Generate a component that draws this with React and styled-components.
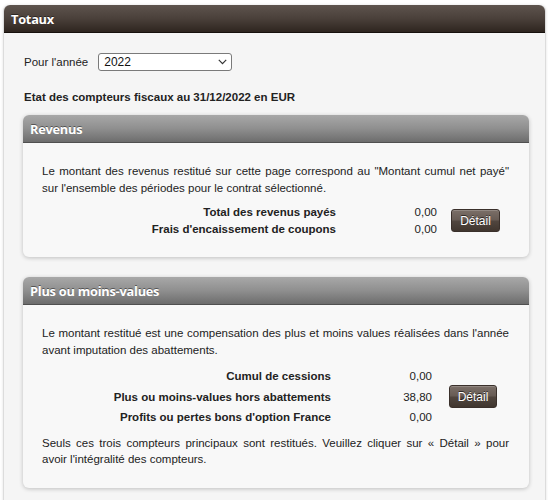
import React from "react";
import styled, { createGlobalStyle } from "styled-components";

const Global = createGlobalStyle`
  html, body { margin: 0; padding: 0; background: #ffffff; }
  body {
    font-family: "Liberation Sans", Arial, sans-serif;
    font-size: 11.5px;
    color: #222;
  }
  * { box-sizing: border-box; }
`;

const Panel = styled.section`
  margin: 5px 2px 12px 3px;
  border: 1px solid #dcdcdc;
  border-top: none;
  border-radius: 6px 6px 0 0;
  background: #f5f5f5;
  box-shadow: 0 0 3px rgba(0, 0, 0, 0.12);
`;

const PanelHeader = styled.header`
  height: 28px;
  display: flex;
  align-items: center;
  padding: 0 7px;
  border-radius: 6px 6px 0 0;
  background: linear-gradient(to bottom, #5e544e 0%, #4a403a 50%, #2e251f 100%);
  border-bottom: 1px solid #17110d;
`;

const Title = styled.h2`
  margin: 0;
  font-family: "Open Sans", "DejaVu Sans", sans-serif;
  font-weight: 700;
  font-size: 12.8px;
  color: #fff;
  letter-spacing: -0.25px;
  text-shadow: 0 -1px 0 rgba(0, 0, 0, 0.45);
`;

const PanelBody = styled.div`
  padding: 20px 16px 12px 19px;
`;

const YearRow = styled.div`
  display: flex;
  align-items: center;
  gap: 10px;
  height: 18px;
  padding-left: 1px;
`;

const SelectWrap = styled.div`
  position: relative;
  width: 134px;
  height: 18px;
`;

const Select = styled.select`
  appearance: none;
  width: 100%;
  height: 100%;
  margin: 0;
  padding: 0 0 0 5px;
  border: 1px solid #7a7a7a;
  border-radius: 3px;
  background: #fff;
  font-family: "Liberation Sans", Arial, sans-serif;
  font-size: 12px;
  color: #111;
`;

const Chevron = styled.svg`
  position: absolute;
  right: 5px;
  top: 6px;
  pointer-events: none;
`;

const Heading = styled.h3`
  margin: 18px 0 10px 1px;
  font-size: 11.5px;
  font-weight: 700;
  line-height: 16px;
  color: #222;
`;

const Card = styled.div`
  background: #f8f8f8;
  border-radius: 6px;
  box-shadow: 0 1px 4px rgba(0, 0, 0, 0.22);
  margin-bottom: 20px;
  overflow: hidden;
`;

const CardHeader = styled.div`
  height: 28px;
  display: flex;
  align-items: center;
  padding: 0 7px;
  background: linear-gradient(to bottom, #a8a8a8 0%, #8f8f8f 50%, #6d6d6d 100%);
  border-bottom: 1px solid #505050;
`;

const CardBody = styled.div`
  padding: 20px 20px 20px 19px;
`;

const Text = styled.p`
  margin: 0;
  line-height: 16.6px;
  text-align: justify;
  color: #222;
`;

const Figures = styled.div`
  display: grid;
  grid-template-columns: ${(p) => p.$label}px ${(p) => p.$value}px auto;
  margin: ${(p) => p.$margin};
`;

const Label = styled.div`
  grid-column: 1;
  font-weight: 700;
  height: ${(p) => (p.$tall ? 25 : 16.6)}px;
  display: flex;
  align-items: center;
  justify-content: flex-end;
`;

const Value = styled.div`
  grid-column: 2;
  height: ${(p) => (p.$tall ? 25 : 16.6)}px;
  display: flex;
  align-items: center;
  justify-content: flex-end;
`;

const ButtonCell = styled.div`
  grid-column: 3;
  grid-row: ${(p) => p.$row};
  display: flex;
  align-items: center;
  padding-left: ${(p) => p.$gap}px;
`;

const DetailButton = styled.button`
  width: ${(p) => p.$w}px;
  height: 23px;
  padding: 0;
  border: 1px solid #3a302b;
  border-radius: 3px;
  background: linear-gradient(
    to bottom,
    #7b6f68 0%,
    #675b54 48%,
    #51463f 52%,
    #40362f 100%
  );
  box-shadow: inset 0 1px 0 rgba(255, 255, 255, 0.18);
  color: #fff;
  font-family: "Liberation Sans", Arial, sans-serif;
  font-size: 12px;
  text-shadow: 0 -1px 0 rgba(0, 0, 0, 0.6);
  cursor: pointer;
`;

const FooterText = styled(Text)`
  margin-top: 9px;
`;

export default function App() {
  return (
    <>
      <Global />
      <Panel>
        <PanelHeader>
          <Title>Totaux</Title>
        </PanelHeader>
        <PanelBody>
          <YearRow>
            <span>Pour l'année</span>
            <SelectWrap>
              <Select defaultValue="2022">
                <option value="2022">2022</option>
                <option value="2021">2021</option>
                <option value="2020">2020</option>
              </Select>
              <Chevron width="9" height="6" viewBox="0 0 9 6">
                <path d="M0.8 0.8 L4.5 4.6 L8.2 0.8" fill="none" stroke="#333" strokeWidth="1.2" />
              </Chevron>
            </SelectWrap>
          </YearRow>

          <Heading>Etat des compteurs fiscaux au 31/12/2022 en EUR</Heading>

          <Card>
            <CardHeader>
              <Title>Revenus</Title>
            </CardHeader>
            <CardBody>
              <Text>
                Le montant des revenus restitué sur cette page correspond au "Montant cumul net payé"
                sur l'ensemble des périodes pour le contrat sélectionné.
              </Text>
              <Figures $label={294} $value={101} $margin="8px 0 0">
                <Label>Total des revenus payés</Label>
                <Value>0,00</Value>
                <ButtonCell $row="1 / span 2" $gap={14}>
                  <DetailButton $w={49}>Détail</DetailButton>
                </ButtonCell>
                <Label>Frais d'encaissement de coupons</Label>
                <Value>0,00</Value>
              </Figures>
            </CardBody>
          </Card>

          <Card>
            <CardHeader>
              <Title>Plus ou moins-values</Title>
            </CardHeader>
            <CardBody>
              <Text>
                Le montant restitué est une compensation des plus et moins values réalisées dans l'année
                avant imputation des abattements.
              </Text>
              <Figures $label={289} $value={101} $margin="9px 0 0">
                <Label>Cumul de cessions</Label>
                <Value>0,00</Value>
                <Label $tall>Plus ou moins-values hors abattements</Label>
                <Value $tall>38,80</Value>
                <ButtonCell $row="2" $gap={17}>
                  <DetailButton $w={48}>Détail</DetailButton>
                </ButtonCell>
                <Label>Profits ou pertes bons d'option France</Label>
                <Value>0,00</Value>
              </Figures>
              <FooterText>
                Seuls ces trois compteurs principaux sont restitués. Veuillez cliquer sur « Détail » pour
                avoir l'intégralité des compteurs.
              </FooterText>
            </CardBody>
          </Card>
        </PanelBody>
      </Panel>
    </>
  );
}
